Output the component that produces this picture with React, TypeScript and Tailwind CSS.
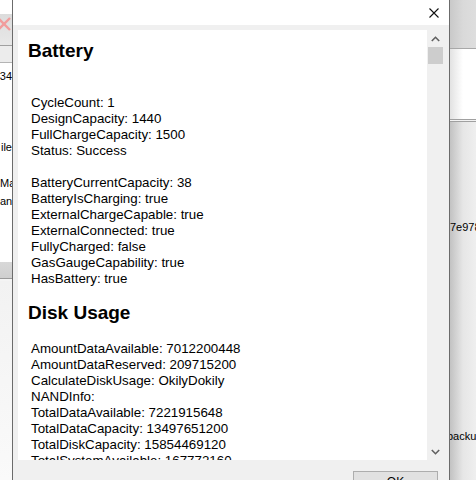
import { ReactNode } from 'react'

const battery = [
  'CycleCount: 1',
  'DesignCapacity: 1440',
  'FullChargeCapacity: 1500',
  'Status: Success',
  '',
  'BatteryCurrentCapacity: 38',
  'BatteryIsCharging: true',
  'ExternalChargeCapable: true',
  'ExternalConnected: true',
  'FullyCharged: false',
  'GasGaugeCapability: true',
  'HasBattery: true',
]

const disk = [
  'AmountDataAvailable: 7012200448',
  'AmountDataReserved: 209715200',
  'CalculateDiskUsage: OkilyDokily',
  'NANDInfo:',
  'TotalDataAvailable: 7221915648',
  'TotalDataCapacity: 13497651200',
  'TotalDiskCapacity: 15854469120',
  'TotalSystemAvailable: 167772160',
]

function Section({ title, lines, first }: { title: string; lines: string[]; first?: boolean }) {
  return (
    <div>
      <h2 className={`pl-[10px] text-[19px] font-bold leading-[22px] ${first ? '' : 'mt-[15px]'}`}>{title}</h2>
      <div className="mt-[17px] pl-[13px] text-[13.33px] leading-[16px]">
        {lines.map((l, i) => (
          <div key={i} className="h-[16px] whitespace-nowrap">{l}</div>
        ))}
      </div>
    </div>
  )
}

function Chevron({ down }: { down?: boolean }) {
  return (
    <svg width="9" height="6" viewBox="0 0 9 6" className={down ? 'rotate-180' : ''}>
      <polyline points="0.8,5 4.5,1.3 8.2,5" fill="none" stroke="#606060" strokeWidth="1.6" />
    </svg>
  )
}

// text of the window behind, cut by the dialog's edge
function Clip({ children, end, className }: { children: ReactNode; end?: boolean; className?: string }) {
  return (
    <div className={`flex h-[14px] overflow-hidden whitespace-nowrap text-[11px] leading-[14px] ${end ? 'justify-end' : ''} ${className ?? ''}`}>
      {children}
    </div>
  )
}

export default function App() {
  return (
    <div className="flex h-[480px] w-[476px] overflow-hidden bg-white font-['Liberation_Sans',Arial,sans-serif] text-black">
      {/* background window, left slice */}
      <div className="flex w-[12px] flex-shrink-0 flex-col overflow-hidden">
        <div className="h-[14px] bg-white" />
        <div className="flex h-[31px] items-start bg-gradient-to-b from-[#dcdcdc] to-[#e8e8e8] pt-[3px]">
          <svg width="12" height="14" viewBox="0 0 12 14">
            <path d="M-2 1 L10 13 M10 1 L-2 13" stroke="#f19c9c" strokeWidth="2.4" />
          </svg>
        </div>
        <div className="h-[17px] border-t border-[#a0a0a0] bg-[#ececec]" />
        <div className="flex flex-1 flex-col border-t border-[#b4b4b4] bg-white" style={{ maxHeight: 200 }}>
          <Clip end className="mt-[6px]">:34</Clip>
          <Clip end className="mt-[57px]">ile</Clip>
          <Clip className="mt-[22px]">Ma</Clip>
          <Clip className="mt-[4px]">an</Clip>
        </div>
        <div className="h-[16px] bg-gradient-to-b from-[#d8d8d8] to-[#cfcfcf]" />
        <div className="h-[3px] border-t border-[#9a9a9a] bg-[#f4f4f4]" />
        <div className="flex-1 bg-gradient-to-b from-[#f2f2f2] to-[#fafafa]" />
      </div>

      {/* dialog */}
      <div className="flex w-[438px] flex-shrink-0 flex-col border-x border-[#6b6b6b] bg-[#f0f0f0]">
        <div className="flex h-[25px] flex-shrink-0 items-center justify-end bg-white pr-[10px]">
          <svg width="10" height="10" viewBox="0 0 10 10">
            <path d="M0.5 0.5 L9.5 9.5 M9.5 0.5 L0.5 9.5" stroke="#111" strokeWidth="1.1" />
          </svg>
        </div>
        <div className="flex h-[435px] flex-shrink-0 pl-[5px] pt-[5px]">
          <div className="w-[409px] overflow-hidden bg-white pt-[10px]">
            <Section title="Battery" lines={['', ...battery]} first />
            <Section title="Disk Usage" lines={disk} />
          </div>
          <div className="flex w-[17px] flex-col bg-[#f0f0f0]">
            <div className="flex h-[17px] items-center justify-center">
              <Chevron />
            </div>
            <div className="mx-[1px] h-[17px] bg-[#cdcdcd]" />
            <div className="flex-1" />
            <div className="flex h-[17px] items-center justify-center">
              <Chevron down />
            </div>
          </div>
        </div>
        <div className="flex flex-1 justify-end pr-[11px] pt-[11px]">
          <button className="h-[23px] w-[85px] border border-[#adadad] bg-[#e1e1e1] text-[12px] leading-[21px]">OK</button>
        </div>
      </div>

      {/* background window, right slice */}
      <div className="flex flex-1 flex-col overflow-hidden">
        <div className="h-[48px] bg-gradient-to-r from-[#c9c9c9] via-[#d9d9d9] to-[#dedede]" />
        <div className="h-[71px] border-t border-[#a8a8a8] bg-gradient-to-r from-[#e2e2e2] via-white to-white" />
        <div className="h-[3px] border-y border-[#a0a0a0] bg-[#f2f2f2]" />
        <div className="flex flex-1 flex-col bg-gradient-to-r from-[#c2c2c2] via-[#e6e6e6] to-[#efefef]">
          <Clip className="mt-[98px]">7e978</Clip>
          <Clip className="ml-[-3px] mt-[195px]">backu</Clip>
        </div>
      </div>
    </div>
  )
}
